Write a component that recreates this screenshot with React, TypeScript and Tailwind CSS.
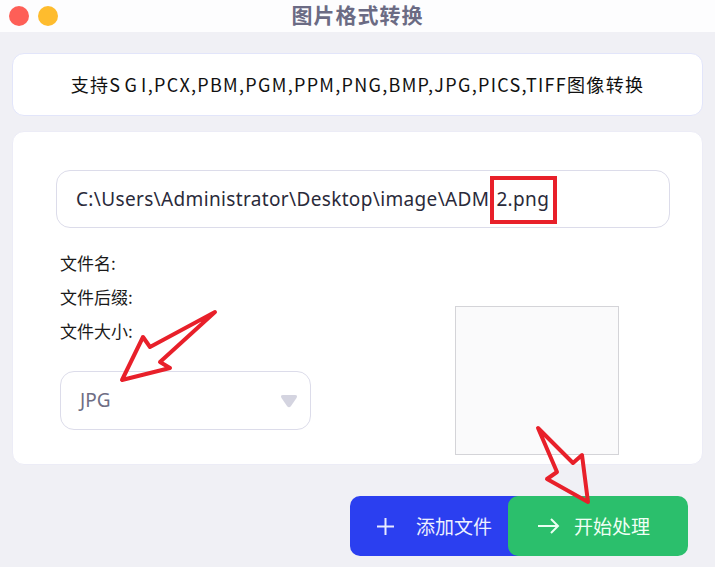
import React from "react";

const cjk = '"Noto Sans CJK SC", "Noto Sans", sans-serif';
const latin = '"Noto Sans", "Noto Sans CJK SC", sans-serif';

export default function App() {
  return (
    <div
      className="relative w-[715px] h-[567px] overflow-hidden bg-[#f0f0f5] flex flex-col"
      style={{ fontFamily: cjk }}
    >
      {/* Title bar */}
      <div className="relative h-[32px] bg-[#fdfdfe] flex items-center shrink-0">
        <div className="flex items-center gap-[9px] pl-[9px]">
          <div className="w-[20px] h-[20px] rounded-full bg-[#fe5f57]" />
          <div className="w-[20px] h-[20px] rounded-full bg-[#febc2e]" />
        </div>
        <div className="absolute inset-0 flex items-start justify-center">
          <span className="text-[21px] leading-[28px] font-bold text-[#6b6b84] tracking-[1px]">
            图片格式转换
          </span>
        </div>
      </div>

      <div className="flex flex-col px-[12px] pt-[21px]">
        {/* Card 1 */}
        <div className="h-[63px] bg-white rounded-[12px] border border-[#e2e5fa] flex items-center justify-center">
          <span
            className="text-[18px] text-[#111] tracking-[1.3px]"
            style={{ fontFamily: cjk }}
          >
            支持S<span className="ml-[3px]">G</span><span className="ml-[3px]">I</span>,PCX,PBM,PGM,PPM,PNG,BMP,JPG,PICS,TIFF图像转换
          </span>
        </div>

        {/* Card 2 */}
        <div className="mt-[15px] h-[334px] bg-white rounded-[12px] border border-[#ececf6] pl-[43px] pr-[32px] pt-[38px] flex flex-col">
          <div className="relative h-[58px] rounded-[14px] border-[1.5px] border-[#dcdcea] flex items-center pl-[19px]">
            <span
              className="text-[19px] text-[#2a2a3a] tracking-[0.35px]"
              style={{ fontFamily: latin }}
            >
              C:\Users\Administrator\Desktop\image\ADM
              <span className="ml-[7px]">2.png</span>
            </span>
            <div className="absolute left-[433px] top-[5px] w-[67px] h-[48px] border-[4px] border-[#e8202a]" />
          </div>

          <div className="flex flex-row mt-[18px]">
            <div className="w-[255px] pl-[4px] flex flex-col">
              <div className="text-[17px] leading-[34px] text-[#1a1a1a] flex flex-col">
                <span>文件名:</span>
                <span>文件后缀:</span>
                <span>文件大小:</span>
              </div>
              <div className="mt-[23px] h-[59px] w-[251px] rounded-[14px] border-[1.5px] border-[#dcdcea] flex items-center justify-between pl-[19px] pr-[12px]">
                <span
                  className="text-[19px] text-[#6e6e84]"
                  style={{ fontFamily: latin }}
                >
                  JPG
                </span>
                <svg width="18" height="14" viewBox="0 0 18 14">
                  <path
                    d="M3 1 H15 Q18 1 16.5 4 L11 12 Q9 14.5 7 12 L1.5 4 Q0 1 3 1 Z"
                    fill="#d4d4e0"
                  />
                </svg>
              </div>
            </div>
            <div className="ml-[144px] mt-[60px] w-[164px] h-[149px] bg-[#fafafb] border-[1.5px] border-[#d4d4d8]" />
          </div>
        </div>

        {/* Buttons */}
        <div className="mt-[31px] flex flex-row justify-end pr-[15px]">
          <div className="relative flex">
            <div className="h-[60px] w-[180px] bg-[#2b3ff0] rounded-[10px] flex items-center pl-[27px] gap-[22px]">
              <svg width="17" height="17" viewBox="0 0 17 17">
                <path d="M8.5 0 V17 M0 8.5 H17" stroke="#e8eaff" strokeWidth="2" />
              </svg>
              <span className="text-[19px] text-[#eef0ff]">添加文件</span>
            </div>
            <div className="-ml-[22px] h-[60px] w-[180px] bg-[#2bbf6c] rounded-[10px] flex items-center pl-[30px] gap-[14px]">
              <svg width="22" height="16" viewBox="0 0 22 16">
                <path
                  d="M0 8 H20 M13 1 L20 8 L13 15"
                  stroke="#e9fff2"
                  strokeWidth="2"
                  fill="none"
                />
              </svg>
              <span className="text-[19px] text-[#f0fff5]">开始处理</span>
            </div>
          </div>
        </div>
      </div>

      {/* Annotation arrows */}
      <svg
        className="absolute inset-0 pointer-events-none"
        width="715"
        height="567"
        viewBox="0 0 715 567"
      >
        <polygon
          points="215,312 150,347 143,337 122,380 170,368 160,362"
          fill="none"
          stroke="#e8202a"
          strokeWidth="4"
          strokeLinejoin="round"
        />
        <polygon
          points="538,428 573,463 582,455 588,502 547,479 557,472"
          fill="none"
          stroke="#e8202a"
          strokeWidth="4"
          strokeLinejoin="round"
        />
      </svg>
    </div>
  );
}
